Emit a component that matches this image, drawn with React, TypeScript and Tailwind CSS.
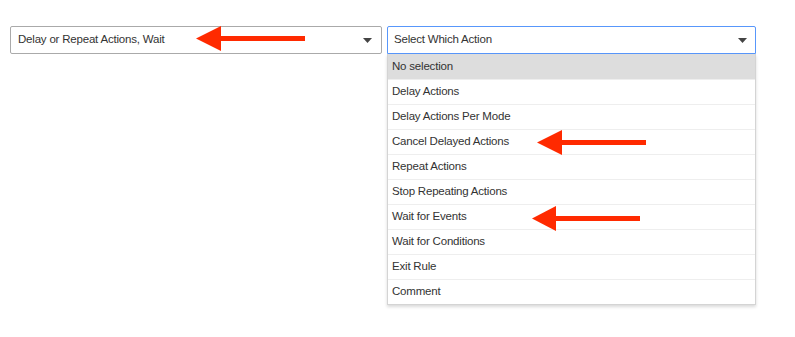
const actions = [
	"No selection",
	"Delay Actions",
	"Delay Actions Per Mode",
	"Cancel Delayed Actions",
	"Repeat Actions",
	"Stop Repeating Actions",
	"Wait for Events",
	"Wait for Conditions",
	"Exit Rule",
	"Comment",
];

const Caret = () => (
	<svg width="9" height="5" viewBox="0 0 9 5" className="shrink-0">
		<path d="M0 0 L9 0 L4.5 5 Z" fill="#444" />
	</svg>
);

// red annotation arrow, tip on the left
const RedArrow = ({
	x,
	y,
	length,
	headW,
	headH,
}: {
	x: number;
	y: number;
	length: number;
	headW: number;
	headH: number;
}) => (
	<svg
		className="absolute pointer-events-none"
		style={{ left: x, top: y - headH / 2 }}
		width={length}
		height={headH}
		viewBox={`0 0 ${length} ${headH}`}>
		<path d={`M0 ${headH / 2} L${headW} 0 L${headW} ${headH} Z`} fill="#ff2a00" />
		<rect x={headW - 1} y={headH / 2 - 2.5} width={length - headW + 1} height={5} fill="#ff2a00" />
	</svg>
);

const App = () => {
	return (
		<div className="relative w-[795px] h-[337px] bg-white font-['Liberation_Sans',Arial,sans-serif] text-[11.5px] tracking-[-0.2px] text-[#333]">
			<div className="flex gap-[5px] pt-[26px] pl-[10px]">
				<div className="w-[372px] h-[28px] border border-[#aaa] rounded-[2px] flex items-center justify-between pl-[7px] pr-[9px] bg-white">
					<span>Delay or Repeat Actions, Wait</span>
					<Caret />
				</div>
				<div className="w-[369px] flex flex-col">
					<div className="h-[28px] border border-[#5897fb] rounded-t-[2px] flex items-center justify-between pl-[6px] pr-[8px] bg-white">
						<span>Select Which Action</span>
						<Caret />
					</div>
					<ul className="border border-t-0 border-[#d4d4d4] shadow-[0_2px_3px_rgba(0,0,0,0.15)] bg-white">
						{actions.map((a, i) => (
							<li
								key={a}
								className={`h-[25px] flex items-center pl-[4px] ${
									i === 0 ? "bg-[#ddd]" : "border-t border-[#eee]"
								}`}>
								{a}
							</li>
						))}
					</ul>
				</div>
			</div>
			<RedArrow x={196} y={38} length={109} headW={25} headH={25} />
			<RedArrow x={537} y={142} length={109} headW={25} headH={25} />
			<RedArrow x={532} y={218} length={108} headW={24} headH={25} />
		</div>
	);
};

export default App;
